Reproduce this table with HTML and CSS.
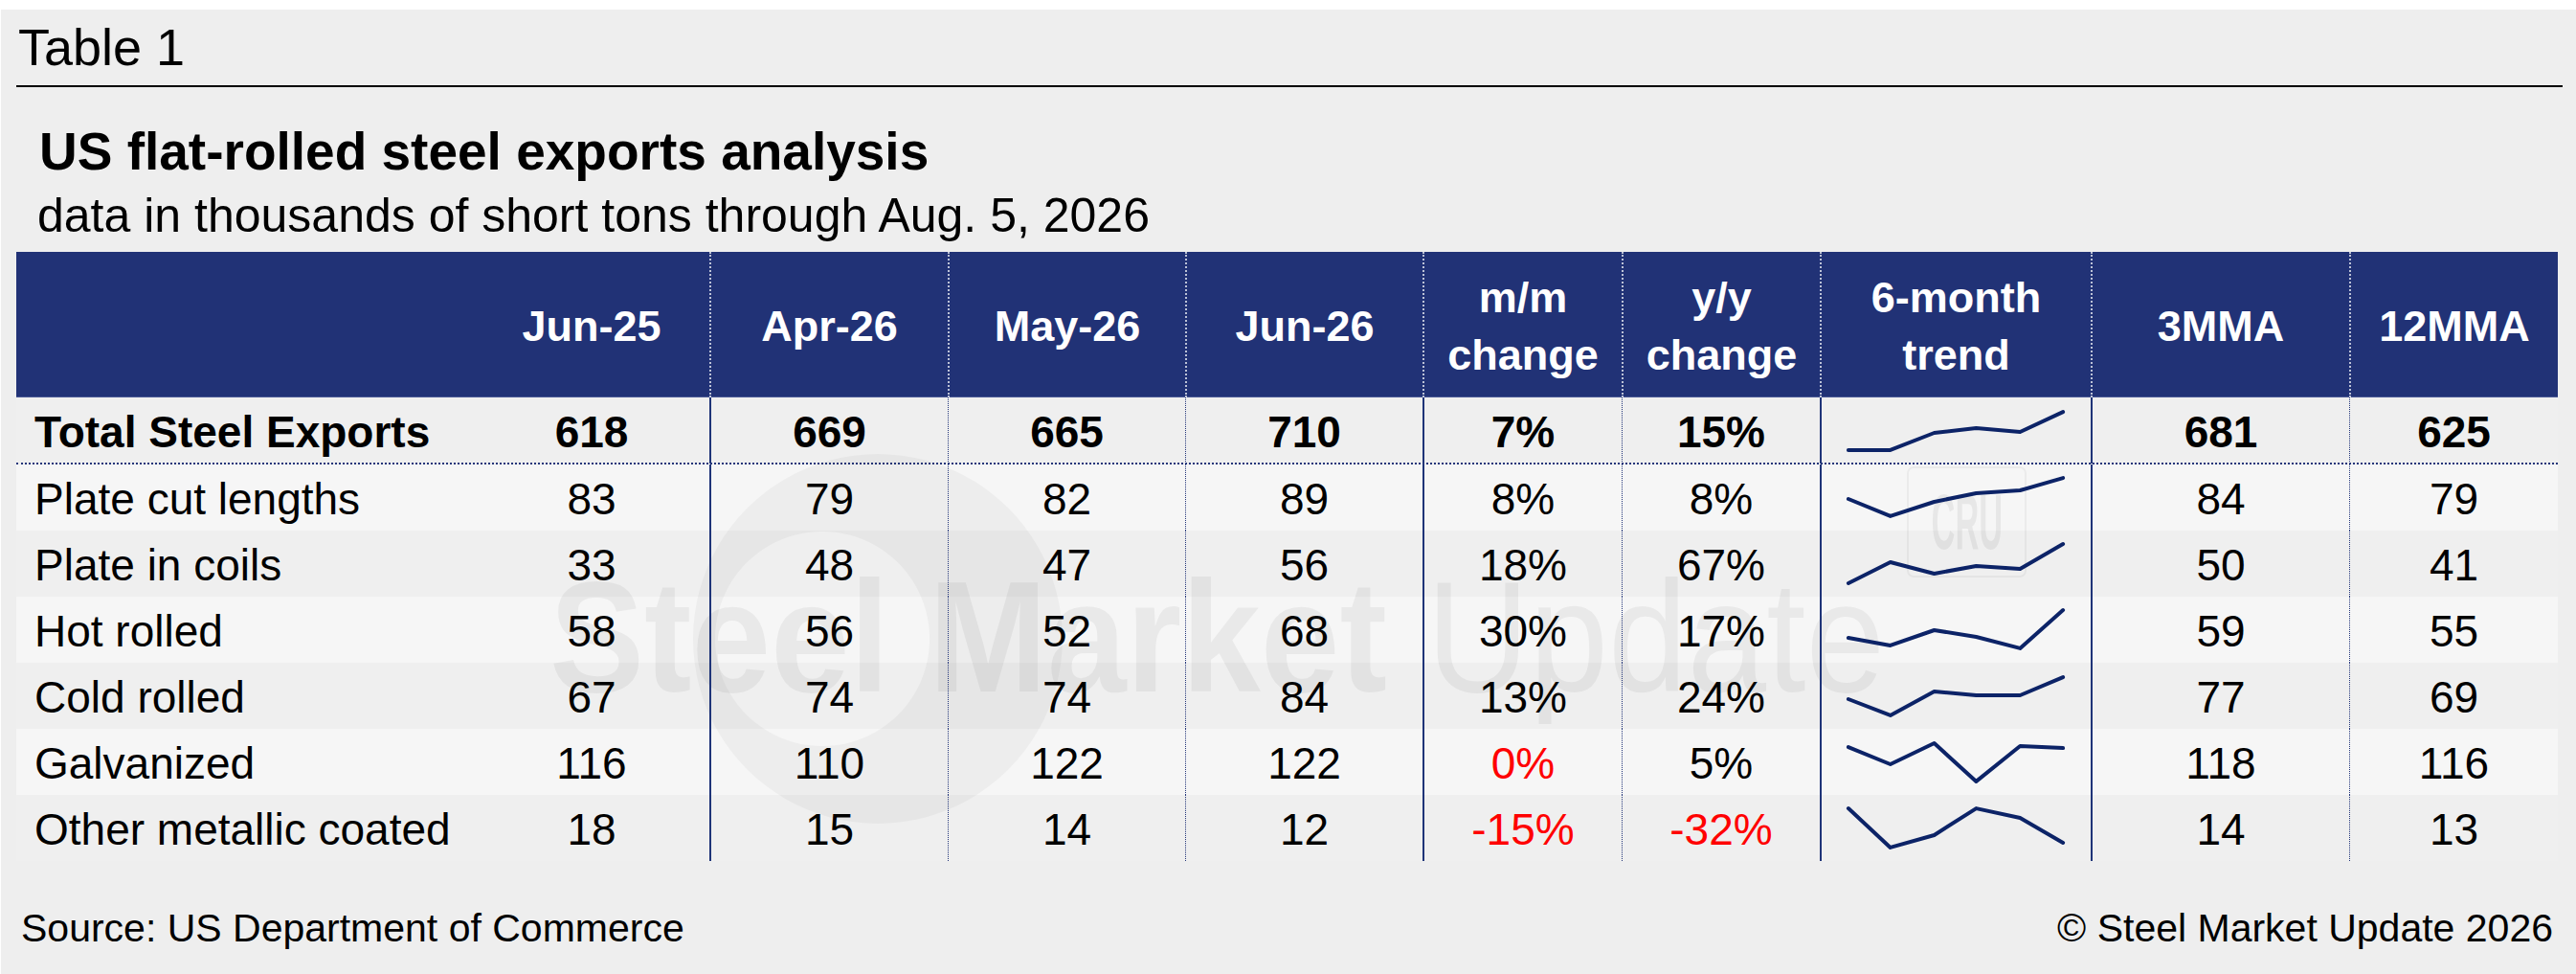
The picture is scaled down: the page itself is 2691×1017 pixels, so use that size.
FILE: index.html
```html
<!DOCTYPE html>
<html lang="en">
<head>
<meta charset="utf-8">
<title>US flat-rolled steel exports analysis</title>
<link rel="stylesheet" href="styles.css">
</head>
<body>
<div class="panel">
  <div class="tag">Table 1</div>
  <h1 class="title">US flat-rolled steel exports analysis</h1>
  <p class="subtitle">data in thousands of short tons through Aug. 5, 2026</p>

  <div class="table">
    <div class="row head">
      <div class="c lab"></div>
      <div class="c">Jun-25</div>
      <div class="c">Apr-26</div>
      <div class="c">May-26</div>
      <div class="c">Jun-26</div>
      <div class="c">m/m<br>change</div>
      <div class="c">y/y<br>change</div>
      <div class="c">6-month<br>trend</div>
      <div class="c">3MMA</div>
      <div class="c">12MMA</div>
    </div>

    <div class="body">
      <svg class="wm-logo" width="400" height="400" viewBox="0 0 400 400" aria-hidden="true">
        <path fill-rule="evenodd" d="M200,7 A193,193 0 1,1 199.9,7 Z M142,88 A112,112 0 1,0 142.1,88 Z"/>
      </svg>
      <div class="wm-text" aria-hidden="true"><b>Steel Market</b> Update</div>
      <div class="wm-cru" aria-hidden="true"><span>CRU</span></div>

      <div class="row total">
        <div class="c lab">Total Steel Exports</div>
        <div class="c">618</div><div class="c">669</div><div class="c">665</div><div class="c">710</div>
        <div class="c">7%</div><div class="c">15%</div>
        <div class="c spark"><svg width="282" height="69" viewBox="0 0 282 69"><polyline points="28,55 72,55 118,37 162,32 208,36 253,15"/></svg></div>
        <div class="c">681</div><div class="c">625</div>
      </div>
      <div class="row lite">
        <div class="c lab">Plate cut lengths</div>
        <div class="c">83</div><div class="c">79</div><div class="c">82</div><div class="c">89</div>
        <div class="c">8%</div><div class="c">8%</div>
        <div class="c spark"><svg width="282" height="69" viewBox="0 0 282 69"><polyline points="28,36 72,54 118,39 162,30 208,27 253,14"/></svg></div>
        <div class="c">84</div><div class="c">79</div>
      </div>
      <div class="row dark">
        <div class="c lab">Plate in coils</div>
        <div class="c">33</div><div class="c">48</div><div class="c">47</div><div class="c">56</div>
        <div class="c">18%</div><div class="c">67%</div>
        <div class="c spark"><svg width="282" height="69" viewBox="0 0 282 69"><polyline points="28,55 72,33 118,45 162,37 208,40 253,14"/></svg></div>
        <div class="c">50</div><div class="c">41</div>
      </div>
      <div class="row lite">
        <div class="c lab">Hot rolled</div>
        <div class="c">58</div><div class="c">56</div><div class="c">52</div><div class="c">68</div>
        <div class="c">30%</div><div class="c">17%</div>
        <div class="c spark"><svg width="282" height="69" viewBox="0 0 282 69"><polyline points="28,43 72,51 118,35 162,42 208,54 253,14"/></svg></div>
        <div class="c">59</div><div class="c">55</div>
      </div>
      <div class="row dark">
        <div class="c lab">Cold rolled</div>
        <div class="c">67</div><div class="c">74</div><div class="c">74</div><div class="c">84</div>
        <div class="c">13%</div><div class="c">24%</div>
        <div class="c spark"><svg width="282" height="69" viewBox="0 0 282 69"><polyline points="28,38 72,55 118,30 162,34 208,34 253,15"/></svg></div>
        <div class="c">77</div><div class="c">69</div>
      </div>
      <div class="row lite">
        <div class="c lab">Galvanized</div>
        <div class="c">116</div><div class="c">110</div><div class="c">122</div><div class="c">122</div>
        <div class="c neg">0%</div><div class="c">5%</div>
        <div class="c spark"><svg width="282" height="69" viewBox="0 0 282 69"><polyline points="28,19 72,37 118,15 162,55 208,18 253,20"/></svg></div>
        <div class="c">118</div><div class="c">116</div>
      </div>
      <div class="row dark">
        <div class="c lab">Other metallic coated</div>
        <div class="c">18</div><div class="c">15</div><div class="c">14</div><div class="c">12</div>
        <div class="c neg">-15%</div><div class="c neg">-32%</div>
        <div class="c spark"><svg width="282" height="69" viewBox="0 0 282 69"><polyline points="28,14 72,55 118,42 162,14 208,24 253,50"/></svg></div>
        <div class="c">14</div><div class="c">13</div>
      </div>
    </div>
  </div>

  <div class="foot">
    <span>Source: US Department of Commerce</span>
    <span>© Steel Market Update 2026</span>
  </div>
</div>
</body>
</html>
```

FILE: styles.css
```css
html, body {
  margin: 0;
  padding: 0;
}

body {
  background: #ffffff;
  font-family: "Liberation Sans", Arial, sans-serif;
  color: #000;
  overflow: hidden;
}

.panel {
  margin: 10px 0 0 1px;
  height: 1007px;
  background: #eeeeee;
  overflow: hidden;
}

.tag {
  margin: 0 14px 0 16px;
  height: 81px;
  box-sizing: border-box;
  padding: 8px 0 0 2px;
  font-size: 54px;
  line-height: 62px;
  border-bottom: 2px solid #000;
}

.title {
  margin: 35px 0 0 40px;
  font-size: 55px;
  line-height: 64px;
  font-weight: 700;
}

.subtitle {
  margin: 6px 0 0 38px;
  font-size: 50px;
  line-height: 58px;
}

.table {
  margin: 9px 0 0 16px;
  width: 2655px;
}

.row {
  display: grid;
  grid-template-columns: 478px 246px 249px 248px 248px 208px 207px 283px 270px 218px;
}

.head {
  height: 152px;
  background: #213276;
  color: #fff;
  font-weight: 700;
  font-size: 45px;
  line-height: 60px;
  box-shadow: inset 0 -1px 0 #4a5a96;
}

.head .c {
  display: flex;
  align-items: center;
  justify-content: center;
  text-align: center;
  padding-top: 4px;
  box-sizing: border-box;
}

.head .c:nth-child(n+3) {
  border-left: 2px dotted rgba(255, 255, 255, 0.7);
}

.body {
  position: relative;
}

.body .row {
  position: relative;
  height: 69px;
  font-size: 46px;
}

.body .c {
  position: relative;
  z-index: 2;
  display: flex;
  align-items: center;
  justify-content: center;
  padding-top: 2px;
  box-sizing: border-box;
  white-space: nowrap;
}

.body .c.lab {
  justify-content: flex-start;
  padding-left: 19px;
}

.body .c:nth-child(3),
.body .c:nth-child(6),
.body .c:nth-child(8),
.body .c:nth-child(9) {
  border-left: 2px solid #1f3478;
}

.body .c:nth-child(4),
.body .c:nth-child(5),
.body .c:nth-child(7),
.body .c:nth-child(10) {
  border-left: 1px dotted #24367a;
}

.body .row.total {
  height: 70px;
  font-weight: 700;
  background: #efefef;
  border-bottom: 2px dotted #24367a;
  box-sizing: border-box;
}

.lite {
  background: #f6f6f6;
}

.dark {
  background: #efefef;
}

.neg {
  color: #ff0000;
}

.body .c.spark {
  padding-top: 0;
  align-items: stretch;
  justify-content: flex-start;
}

.spark svg {
  display: block;
}

.spark polyline {
  fill: none;
  stroke: #0c2367;
  stroke-width: 4;
  stroke-linejoin: round;
  stroke-linecap: round;
}

.wm-logo {
  position: absolute;
  z-index: 1;
  left: 700px;
  top: 52px;
  fill: rgba(0, 0, 0, 0.035);
  pointer-events: none;
}

.wm-text {
  position: absolute;
  z-index: 1;
  left: 557px;
  top: 168px;
  font-size: 165px;
  line-height: 165px;
  white-space: nowrap;
  color: rgba(0, 0, 0, 0.05);
  transform: scaleX(0.9);
  transform-origin: left center;
  pointer-events: none;
}

.wm-text b {
  font-weight: 700;
}

.wm-cru {
  position: absolute;
  z-index: 1;
  left: 1975px;
  top: 72px;
  width: 125px;
  height: 116px;
  box-sizing: border-box;
  border: 2px solid rgba(0, 0, 0, 0.045);
  border-radius: 7px;
  display: flex;
  align-items: center;
  justify-content: center;
  pointer-events: none;
}

.wm-cru span {
  display: inline-block;
  font-size: 82px;
  line-height: 82px;
  font-weight: 700;
  color: rgba(0, 0, 0, 0.06);
  transform: scaleX(0.42);
}

.foot {
  display: flex;
  justify-content: space-between;
  margin: 46px 24px 0 21px;
  font-size: 41px;
  line-height: 48px;
}
```
